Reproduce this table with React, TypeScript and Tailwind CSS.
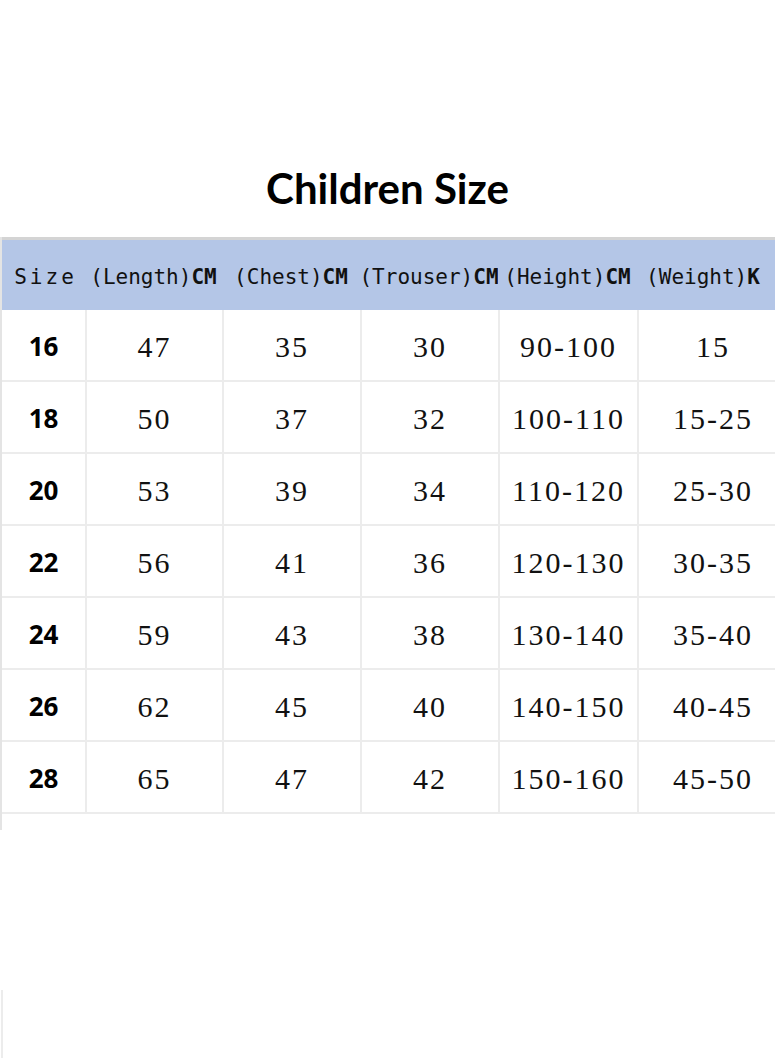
import React from "react";

const headers = [
  { label: "Size", unit: "" },
  { label: "(Length)", unit: "CM" },
  { label: "(Chest)", unit: "CM" },
  { label: "(Trouser)", unit: "CM" },
  { label: "(Height)", unit: "CM" },
  { label: "(Weight)", unit: "K" },
];

const rows = [
  ["16", "47", "35", "30", "90-100", "15"],
  ["18", "50", "37", "32", "100-110", "15-25"],
  ["20", "53", "39", "34", "110-120", "25-30"],
  ["22", "56", "41", "36", "120-130", "30-35"],
  ["24", "59", "43", "38", "130-140", "35-40"],
  ["26", "62", "45", "40", "140-150", "40-45"],
  ["28", "65", "47", "42", "150-160", "45-50"],
];

const cols = "grid grid-cols-[83px_137px_138px_138px_139px_150px]";

export default function App() {
  return (
    <div className="w-[775px] h-[1062px] bg-white overflow-hidden">
      <h1 className="pt-[160px] h-[237px] text-center text-[42px] leading-[56px] font-bold text-black font-['Lato',sans-serif]">
        Children Size
      </h1>

      <div className="border-l-2 border-[#e4e4e4] w-[790px]">
        <div className={`${cols} h-[73px] bg-[#b4c6e7] border-t-[3px] border-[#d4d4d4]`}>
          {headers.map((h, i) => (
            <div
              key={i}
              className="flex items-center justify-center pt-[5px] overflow-hidden whitespace-nowrap text-[21px] text-[#111] font-['DejaVu_Sans_Mono',monospace]"
            >
              {i === 0 ? (
                <span className="tracking-[3px] pl-1">{h.label}</span>
              ) : (
                <span className={i === 5 ? "pr-[18px]" : ""}>
                  {h.label}
                  <span className="font-bold">{h.unit}</span>
                </span>
              )}
            </div>
          ))}
        </div>

        {rows.map((r, ri) => (
          <div key={ri} className={`${cols} h-[72px] border-b-2 border-[#ececec]`}>
            {r.map((c, ci) => (
              <div
                key={ci}
                className={`flex items-center justify-center pt-[3px] ${ci > 0 ? "border-l-2 border-[#ececec]" : ""}`}
              >
                {ci === 0 ? (
                  <span className="text-[26px] font-bold text-black font-['Open_Sans',sans-serif]">{c}</span>
                ) : (
                  <span className="text-[30px] tracking-[2px] text-[#111] font-['Liberation_Serif',serif]">{c}</span>
                )}
              </div>
            ))}
          </div>
        ))}
        <div className="h-[16px]" />
      </div>

      <div className="mt-[160px] h-[68px] w-[2px] ml-[1px] bg-[#ececec]" />
    </div>
  );
}
